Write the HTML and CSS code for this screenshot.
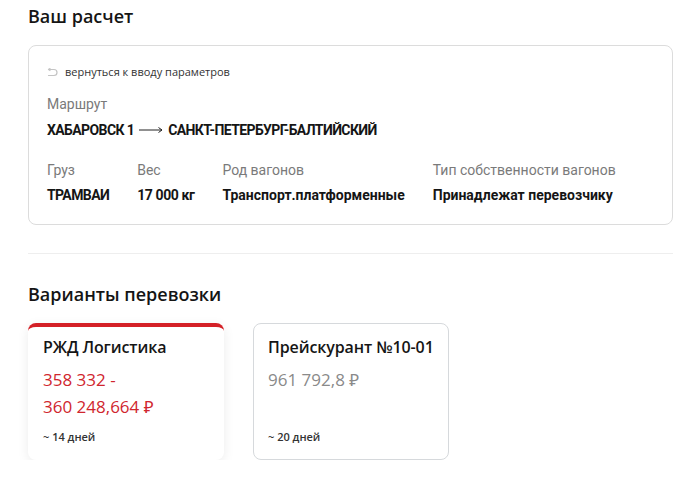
FILE: index.html
```html
<!DOCTYPE html>
<html lang="ru">
<head>
<meta charset="utf-8">
<link rel="stylesheet" href="styles.css">
</head>
<body>
<main class="page">
  <h1 class="title">Ваш расчет</h1>
  <section class="summary">
    <a class="back" href="#">
      <svg class="back-icon" width="11" height="9" viewBox="0 0 11 9"><path d="M1.5 1.5 H7 a3 3 0 0 1 0 6 H1.5 M1.5 1.5 l1.5 -1 M1.5 1.5 l1.5 1" fill="none" stroke="#c4c4c4" stroke-width="1.2" stroke-linecap="round"/></svg>
      <span>вернуться к вводу параметров</span>
    </a>
    <div class="label route-label">Маршрут</div>
    <div class="value caps route">ХАБАРОВСК 1
      <svg class="arrow" width="26" height="8" viewBox="0 0 26 8"><path d="M1 4 H24 M20.5 1.5 L24 4 L20.5 6.5" fill="none" stroke="#222" stroke-width="1"/></svg>
      САНКТ-ПЕТЕРБУРГ-БАЛТИЙСКИЙ</div>
    <div class="params">
      <div class="param"><div class="label">Груз</div><div class="value caps">ТРАМВАИ</div></div>
      <div class="param"><div class="label">Вес</div><div class="value tight">17 000 кг</div></div>
      <div class="param"><div class="label">Род вагонов</div><div class="value">Транспорт.платформенные</div></div>
      <div class="param"><div class="label">Тип собственности вагонов</div><div class="value">Принадлежат перевозчику</div></div>
    </div>
  </section>
  <hr class="sep">
  <h2 class="title">Варианты перевозки</h2>
  <div class="options">
    <div class="option option-active">
      <div class="opt-title">РЖД Логистика</div>
      <div class="price price-red">358 332 -<br>360 248,664 ₽</div>
      <div class="days">~ 14 дней</div>
    </div>
    <div class="option">
      <div class="opt-title">Прейскурант №10-01</div>
      <div class="price price-grey">961 792,8 ₽</div>
      <div class="days">~ 20 дней</div>
    </div>
  </div>
</main>
</body>
</html>
```

FILE: styles.css
```css
* { box-sizing: border-box; }
html, body { margin: 0; background: #fff; }
body { font-family: "Open Sans", "Noto Sans", sans-serif; color: #111; }
.page { padding: 4px 27px 0 28px; }
.title { margin: 0; font-size: 18px; line-height: 24px; font-weight: 600; color: #151515; }
.summary {
  margin-top: 17px;
  border: 1px solid #dcdcdc;
  border-radius: 8px;
  padding: 19px 18px 20px;
}
.back { display: flex; align-items: center; gap: 7px; text-decoration: none; color: #333; font-size: 11px; line-height: 14px; }
.back-icon { flex: none; }
.label { font-family: Roboto, "Liberation Sans", sans-serif; font-size: 14px; line-height: 18px; color: #7a7a7a; }
.value { font-family: Roboto, "Liberation Sans", sans-serif; font-size: 14px; line-height: 18px; font-weight: 700; color: #151515; }
.caps { letter-spacing: -0.6px; }
.tight { letter-spacing: -0.4px; }
.route-label { margin-top: 16px; }
.route { margin-top: 8px; display: flex; align-items: center; gap: 4px; }
.arrow { flex: none; }
.params { margin-top: 22px; display: flex; gap: 28px; }
.param .value { margin-top: 7px; }
.sep { margin: 28px 0 0; border: 0; border-top: 1px solid #eeeeee; }
h2.title { margin-top: 28px; }
.options { margin-top: 17px; display: flex; gap: 29px; }
.option {
  width: 196px; height: 137px;
  border: 1px solid #d6d9dc;
  border-radius: 8px;
  padding: 12px 14px 15px;
  display: flex; flex-direction: column;
}
.option-active {
  border: 0;
  border-top: 4px solid #d42027;
  padding: 9px 15px 16px;
  box-shadow: 0 3px 12px rgba(0,0,0,0.08);
}
.opt-title { font-size: 16px; line-height: 22px; font-weight: 600; color: #151515; white-space: nowrap; letter-spacing: -0.1px; }
.price { margin-top: 8px; font-size: 17px; line-height: 27px; }
.price-red { color: #d0262e; }
.price-grey { color: #8a8a8a; }
.days { margin-top: auto; font-size: 11px; line-height: 14px; font-weight: 600; color: #333; }
```
